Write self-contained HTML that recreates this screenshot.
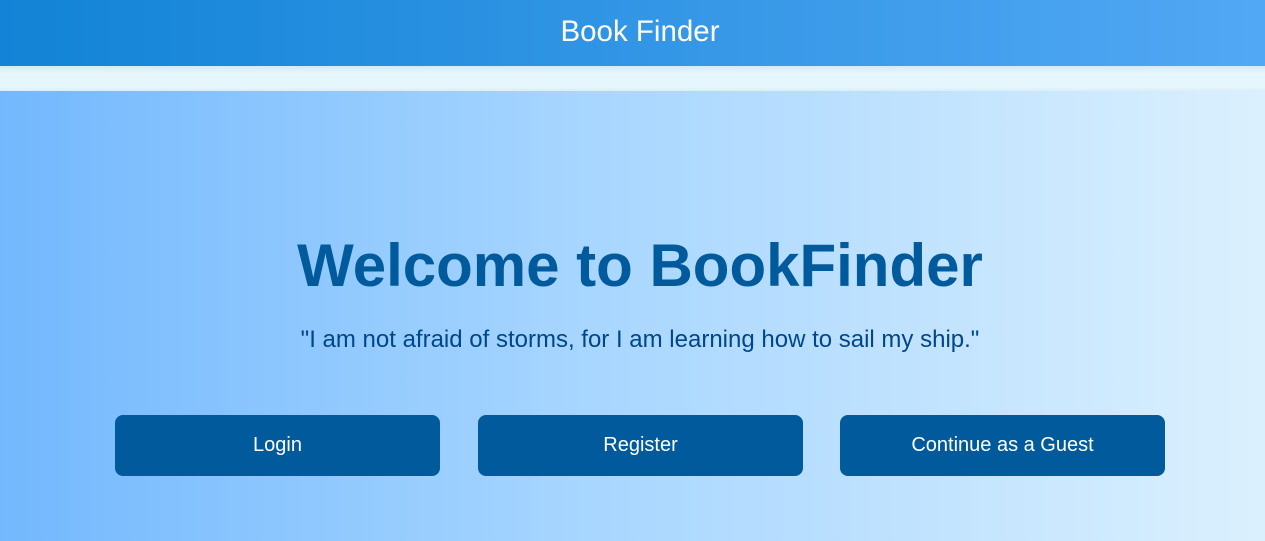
<!DOCTYPE html>
<html><head><meta charset="utf-8"><style>
*{margin:0;padding:0;box-sizing:border-box}
html,body{width:1265px;height:541px;overflow:hidden;font-family:"Liberation Sans",Arial,sans-serif}
.hdr{position:absolute;left:0;top:0;width:1265px;height:66px;padding-left:15px;background:linear-gradient(90deg,#1283d6,#52a8f4);color:#fff;font-size:29.5px;text-align:center;line-height:63px}
.band{position:absolute;left:0;top:66px;width:1265px;height:25px;background:linear-gradient(180deg,#d6eaf3 0,#e6f6fd 30%,#e6f6fd 85%,#d9eef8 100%)}
.main{position:absolute;left:0;top:91px;width:1265px;height:450px;background:linear-gradient(90deg,#73b8fd 0,#a6d5ff 45%,#dbf0fe 100%)}
h1{position:absolute;left:0;width:1265px;padding-left:15px;top:140px;text-align:center;font-size:60px;font-weight:bold;color:#005a9c;line-height:70px}
.q{position:absolute;left:0;width:1265px;padding-left:15px;top:234px;text-align:center;font-size:24px;color:#00468a;line-height:30px}
.b{position:absolute;top:324px;width:325px;height:61px;background:#005a9c;border-radius:8px;color:#fff;font-size:20px;text-align:center;line-height:60px}
</style></head><body>
<div class="hdr">Book Finder</div>
<div class="band"></div>
<div class="main">
<h1>Welcome to BookFinder</h1>
<div class="q">"I am not afraid of storms, for I am learning how to sail my ship."</div>
<div class="b" style="left:115px">Login</div>
<div class="b" style="left:478px">Register</div>
<div class="b" style="left:840px">Continue as a Guest</div>
</div>
</body></html>
